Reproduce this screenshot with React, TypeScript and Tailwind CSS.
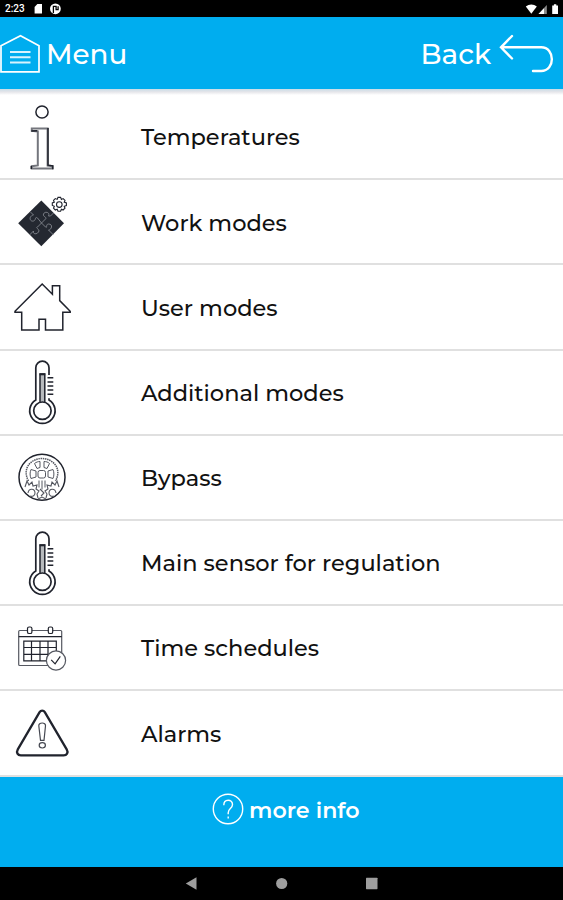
import type { ReactNode } from "react";

const INK = "#20232d";

function RowIcon({ children }: { children: ReactNode }) {
  return (
    <svg
      viewBox="0 0 84 85"
      className="mt-px h-[85px] w-[84px] shrink-0"
      fill="none"
      stroke={INK}
      strokeWidth="1.5"
    >
      {children}
    </svg>
  );
}

function InfoIcon() {
  return (
    <RowIcon>
      <circle cx="42" cy="17" r="6.1" />
      <path d="M31.8 33.6H47.6V70.6l4.8.6v2.4H31.8v-2.4l6-.8V36.4l-6-.6z" stroke="#74767d" strokeWidth="2" />
      <path d="M48 33v37.2l4.8.6v3.4M31.3 36l6-.2M31.3 71v3" />
    </RowIcon>
  );
}

function PuzzleIcon() {
  return (
    <RowIcon>
      <path d="M41.3 20.5 64 43.2 41.3 66.3 18.2 43.2z" fill="#242831" stroke="none" />
      <g stroke="#8d9098" strokeWidth="0.8">
        <path d="m30.5 32 3 3c-5 1-4 7 0 6 3-1 1-5 4-3l4 5 4-4c2-2-3-2-2-5s7-2 5 2l2 0 3-3" />
        <path d="m41.5 43-4 4c-3 1 3 2 1 5s-6 2-5-1l-4 4M41.5 43l4 4c2 2 0-3 3-3 5 0 3 6 0 6l5 5" />
      </g>
      <path
        d="m58 17.4 2.6 0 .8 2 1.7-.8 1.9 1.8-.8 1.7 2.2.8v2.6l-2.2.8.8 1.9-1.9 1.8-1.7-.8-.8 2h-2.6l-.8-2-1.9.8-1.8-1.8.8-1.9-2-.8v-2.6l2-.8-.8-1.7 1.8-1.8 1.9.8z"
        strokeWidth="1.1"
      />
      <circle cx="59.3" cy="24.6" r="2.8" strokeWidth="1.1" />
    </RowIcon>
  );
}

function HouseIcon() {
  return (
    <RowIcon>
      <path d="M42.2 19 15 46.3v1h6.7V65H39V54.3h6.5V65h17.3V47.3h7.4v-1L59.7 35.6V20.8h-7.3v8.4z" />
    </RowIcon>
  );
}

function ThermometerIcon() {
  return (
    <RowIcon>
      <path
        d="M49 25v-7.3a6.6 6.6 0 0 0-13.2 0v32.2a12.7 12.7 0 1 0 13.2 0v-1.7"
        strokeWidth="1.7"
      />
      <path d="M40 52V24h4.8v28" fill="#b7babd" />
      <path d="M39.6 24.3h5.6" strokeWidth="2" />
      <circle cx="42.4" cy="60.7" r="8.7" strokeWidth="1.7" />
      <path d="M47.5 27.8h5.8M47.5 32h5.8M47.5 36h5.8M47.5 40h5.8M47.5 44.3h5.8" strokeWidth="1.6" />
    </RowIcon>
  );
}

function BypassIcon() {
  return (
    <RowIcon>
      <circle cx="42" cy="42.2" r="23" />
      <g stroke="#555861" strokeWidth="1">
        <path d="M28.5 46c-7-13 3-22.5 13.5-22.5S62.5 33 55.5 46" strokeWidth="1.5" strokeDasharray="1.5 0.7" />
        <rect x="38" y="35.5" width="7.5" height="7.5" rx="2" />
        <path d="M34.5 28.5c2-1.5 3.5-2 5.5-2v6l-3 1zM44 26.5c2 0 4 .5 5.5 2L47 33.5l-3-1zM31 34.5l5 1.5v6l-5 1.5c-1.2-3-1.2-6 0-9zM53 34.5 48 36v6l5 1.5c1.2-3 1.2-6 0-9z" />
        <path d="M39 45.5v7M42 45.5v9M45 45.5v7" />
        <path d="m25 52 2-6 2 4 3-3 1 4 4-1-1 4 3 2-2 3 1 4M59 52l-2-6-2 4-3-3-1 4-4-1 1 4-3 2 2 3-1 4" strokeWidth="1.1" />
        <path d="M28 58c1-5.5 7-4.5 7 0 0 3-3 4-5 3M56 58c-1-5.5-7-4.5-7 0 0 3 3 4 5 3M40 54l4 4-3 3M38 64l4-2 4 2" strokeWidth="1.1" />
      </g>
    </RowIcon>
  );
}

function CalendarIcon() {
  return (
    <RowIcon>
      <g stroke="#555861" strokeWidth="1.2">
        <rect x="18.7" y="24.5" width="43" height="35" rx="1" />
        <path d="M18.7 30.7h43" stroke={INK} />
        <g fill="#fff" stroke={INK}>
          <rect x="27.5" y="21" width="4.4" height="6.5" rx="1.6" />
          <rect x="48.3" y="21" width="4.4" height="6.5" rx="1.6" />
        </g>
        <path d="M23.8 35.2h32.5v19.6H23.8zM31.5 35.2v19.6M40 35.2v19.6M48 35.2v19.6M23.8 41.5h32.5M23.8 48.3h32.5" stroke={INK} />
        <circle cx="56" cy="54.5" r="9.6" fill="#fff" />
        <path d="m51.2 53.8 3.9 4 5.2-7.4" stroke={INK} />
      </g>
    </RowIcon>
  );
}

function AlarmIcon() {
  return (
    <RowIcon>
      <path
        d="M39.6 21.2 17.8 58.4c-1.8 3.4-.1 6 3 6h42.8c3.2 0 5-2.8 3.1-6L44.8 21.2c-1.3-2.2-3.9-2.2-5.2 0z"
        strokeWidth="2.3"
      />
      <g strokeWidth="1.2" stroke="#454851">
        <path d="M42.2 32c2 0 3.4 1 3.3 2.8L44 49.3h-3.5l-1.7-14.5C38.7 33 40.2 32 42.2 32z" />
        <ellipse cx="42.3" cy="54.3" rx="3.1" ry="2.7" />
      </g>
    </RowIcon>
  );
}

const items = [
  { label: "Temperatures", icon: <InfoIcon /> },
  { label: "Work modes", icon: <PuzzleIcon /> },
  { label: "User modes", icon: <HouseIcon /> },
  { label: "Additional modes", icon: <ThermometerIcon /> },
  { label: "Bypass", icon: <BypassIcon /> },
  { label: "Main sensor for regulation", icon: <ThermometerIcon /> },
  { label: "Time schedules", icon: <CalendarIcon /> },
  { label: "Alarms", icon: <AlarmIcon /> },
];

function StatusBar() {
  return (
    <div className="flex h-[17px] items-center justify-between bg-black text-white">
      <div className="flex items-center pt-px pl-[5px]">
        <span className="w-[29px] font-[Roboto] text-[10px] leading-none font-medium">2:23</span>
        <svg viewBox="0 0 30 12" className="h-3 w-[30px]" fill="#fff">
          <path d="M3.4 1H8v9.5H.6V4z" />
          <circle cx="21.4" cy="5.8" r="5.4" />
          <path d="M19.4 10V3.3h2.7v3.4h2V3.3" fill="none" stroke="#000" strokeWidth="1.3" />
        </svg>
      </div>
      <svg viewBox="0 0 36 12" className="mr-[3px] h-3 w-9" fill="#fff">
        <path d="M2.8 3.3c3.3-2.7 7.8-2.7 11 0L8.3 10.5z" transform="translate(-1 .3)" />
        <path d="M14.5 11 22.8 2v9z" fill="#8b8b8b" />
        <path d="M14.5 11 20 5.2V11z" />
        <path d="M28.2 2.5h1.7V1.2h2.4v1.3H34V11h-5.8z" />
      </svg>
    </div>
  );
}

function Header() {
  return (
    <header className="flex h-[72px] items-center justify-between bg-[#00adef] text-white">
      <div className="flex items-center">
        <svg viewBox="0 0 46 72" className="h-[72px] w-[46px]" fill="none" stroke="#fff">
          <path d="M1 28.8 20.5 18.7 39 28.8v26H1z" strokeWidth="1.7" />
          <path d="M10 35h20.5M10 40.3h20.5M10 45.6h20.5" strokeWidth="2" strokeOpacity="0.85" />
        </svg>
        <span className="mt-1 text-[27.8px] leading-none font-medium">Menu</span>
      </div>
      <div className="flex items-center">
        <span className="mt-1 text-[27.8px] leading-none font-medium">Back</span>
        <svg viewBox="0 0 72 72" className="h-[72px] w-[72px]" fill="none" stroke="#fff" strokeWidth="2.4" strokeLinecap="round">
          <path d="M21 19 10 30.3l11 11.2M10.5 30.3h39.7c14.2 0 14.2 23.7 0 23.7H42" />
        </svg>
      </div>
    </header>
  );
}

export default function App() {
  return (
    <div className="flex h-[900px] w-full flex-col overflow-hidden bg-white font-[Montserrat,Inter,sans-serif]">
      <StatusBar />
      <Header />
      <div className="h-[6px] shrink-0 bg-gradient-to-b from-[#c9dce7] via-[#e6e6ea] to-white" />

      <ul className="shrink-0">
        {items.map((item) => (
          <li
            key={item.label}
            className="flex h-[85.2px] items-center border-b-2 border-[#e0e0e0] text-[#111]"
          >
            {item.icon}
            <span className="mt-[2px] ml-[57px] text-[22.5px] leading-none font-medium whitespace-nowrap">
              {item.label}
            </span>
          </li>
        ))}
      </ul>

      <footer className="flex flex-1 items-start bg-[#00adef] pl-[212px] text-white">
        <svg viewBox="0 0 32 32" className="mt-4 h-8 w-8" fill="none" stroke="#fff" strokeWidth="1.4">
          <circle cx="16" cy="16" r="14.7" />
          <path d="M11.8 12.2c0-6.5 8.7-6.3 8.7-.7 0 4-4.3 4.2-4.3 8.2v1.6M16.2 23.5v2" />
        </svg>
        <span className="mt-[23px] ml-[5px] text-[22.2px] leading-none font-semibold">more info</span>
      </footer>

      <nav className="h-[33px] shrink-0 bg-black">
        <svg viewBox="0 0 563 33" className="h-[33px] w-[563px]" fill="#9e9e9e">
          <path d="M185.8 16.5 196.5 10.3v12.4z" />
          <circle cx="281.7" cy="16.5" r="5.6" />
          <rect x="366" y="10.7" width="11.5" height="11.5" rx="0.6" />
        </svg>
      </nav>
    </div>
  );
}
